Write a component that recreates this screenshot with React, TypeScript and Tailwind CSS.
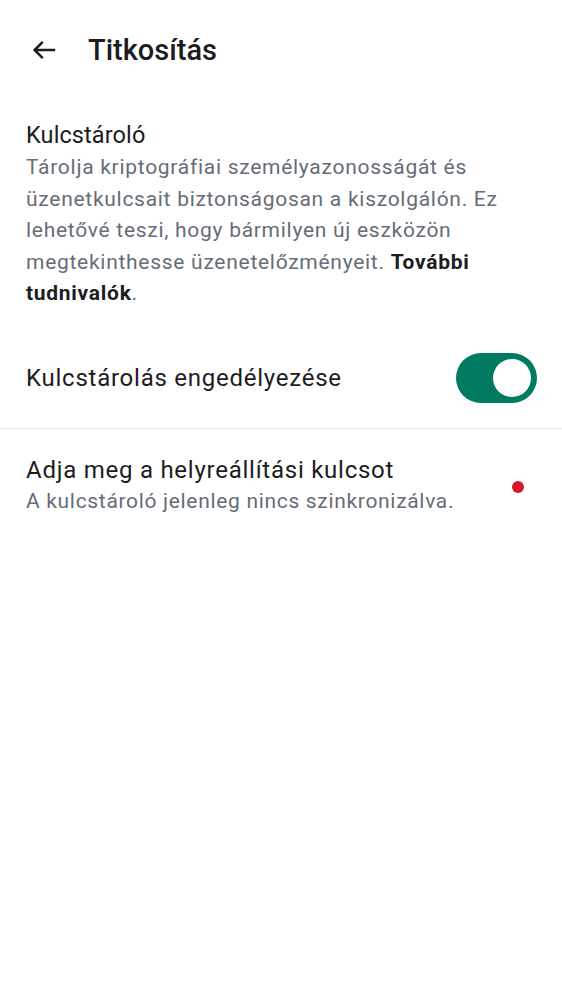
import React from "react";

export default function App() {
  return (
    <div className="min-h-[1000px] w-full bg-white text-[#1b1d22]" style={{ fontFamily: "Roboto, 'Noto Sans', sans-serif" }}>
      <div className="flex h-[100px] items-center">
        <div className="flex w-[88px] items-center justify-start pl-[29px]">
          <svg width="30" height="30" viewBox="0 0 24 24" fill="none" stroke="#1b1d22" strokeWidth="2" strokeLinecap="square">
            <path d="M20 12H5" />
            <path d="M11 5.5L4.5 12L11 18.5" strokeLinecap="butt" />
          </svg>
        </div>
        <h1 className="text-[29px] font-medium leading-none tracking-[0px]">Titkosítás</h1>
      </div>

      <div className="px-[26px] pt-[20px]">
        <div className="text-[23.5px] leading-[30px] tracking-[0.1px]">Kulcstároló</div>
        <p className="mt-[2px] text-[21px] leading-[31.5px] tracking-[0.72px] text-[#656d77]">
          Tárolja kriptográfiai személyazonosságát és üzenetkulcsait biztonságosan a kiszolgálón. Ez lehetővé teszi, hogy bármilyen új eszközön megtekinthesse üzenetelőzményeit.{" "}
          <span className="font-bold text-[#1b1d22]">További tudnivalók</span>.
        </p>
      </div>

      <div className="flex items-center justify-between pl-[26px] pr-[25px] pt-[43px] pb-[25px]">
        <span className="text-[24px] leading-[30px] tracking-[0.75px]">Kulcstárolás engedélyezése</span>
        <div className="flex h-[50px] w-[81px] items-center justify-end rounded-full bg-[#007a61] pr-[6px]">
          <div className="h-[38px] w-[38px] rounded-full bg-white" />
        </div>
      </div>

      <div className="h-px bg-[#e1e6ec]" />

      <div className="flex items-center justify-between pl-[26px] pr-[38px] pt-[26px]">
        <div>
          <div className="text-[24px] leading-[30px] tracking-[0.75px]">Adja meg a helyreállítási kulcsot</div>
          <div className="mt-[1px] text-[21px] leading-[30px] tracking-[0.68px] text-[#656d77]">A kulcstároló jelenleg nincs szinkronizálva.</div>
        </div>
        <div className="mt-[4px] h-[12px] w-[12px] rounded-full bg-[#d51928]" />
      </div>
    </div>
  );
}
